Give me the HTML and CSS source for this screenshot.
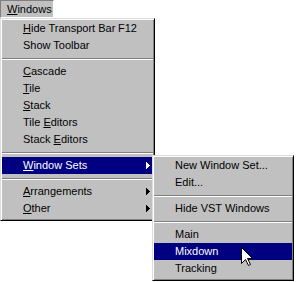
FILE: index.html
```html
<!DOCTYPE html>
<html>
<head>
<meta charset="utf-8">
<link rel="stylesheet" href="styles.css">
</head>
<body>
<div class="screen">
  <div class="menubar"><span class="mb-item pressed"><u>W</u>indows</span></div>

  <div class="menu main">
    <div class="item"><span class="label wide"><u>H</u>ide Transport Bar</span><span class="key">F12</span></div>
    <div class="item"><span class="label">Show Toolbar</span></div>
    <div class="sep"></div>
    <div class="item"><span class="label"><u>C</u>ascade</span></div>
    <div class="item"><span class="label"><u>T</u>ile</span></div>
    <div class="item"><span class="label"><u>S</u>tack</span></div>
    <div class="item"><span class="label">Tile <u>E</u>ditors</span></div>
    <div class="item"><span class="label">Stack <u>E</u>ditors</span></div>
    <div class="sep"></div>
    <div class="item active has-sub"><span class="label"><u>W</u>indow Sets</span><svg class="arrow" width="4" height="7" viewBox="0 0 4 7"><rect x="0" y="0" width="1" height="7"/><rect x="1" y="1" width="1" height="5"/><rect x="2" y="2" width="1" height="3"/><rect x="3" y="3" width="1" height="1"/></svg></div>
    <div class="sep"></div>
    <div class="item has-sub"><span class="label"><u>A</u>rrangements</span><svg class="arrow" width="4" height="7" viewBox="0 0 4 7"><rect x="0" y="0" width="1" height="7"/><rect x="1" y="1" width="1" height="5"/><rect x="2" y="2" width="1" height="3"/><rect x="3" y="3" width="1" height="1"/></svg></div>
    <div class="item has-sub"><span class="label"><u>O</u>ther</span><svg class="arrow" width="4" height="7" viewBox="0 0 4 7"><rect x="0" y="0" width="1" height="7"/><rect x="1" y="1" width="1" height="5"/><rect x="2" y="2" width="1" height="3"/><rect x="3" y="3" width="1" height="1"/></svg></div>
  </div>

  <div class="menu sub">
    <div class="item"><span class="label">New Window Set...</span></div>
    <div class="item"><span class="label">Edit...</span></div>
    <div class="sep"></div>
    <div class="item"><span class="label">Hide VST Windows</span></div>
    <div class="sep"></div>
    <div class="item"><span class="label">Main</span></div>
    <div class="item active"><span class="label">Mixdown</span></div>
    <div class="item"><span class="label">Tracking</span></div>
  </div>

  <svg class="cursor" width="12" height="20" viewBox="0 0 12 20">
    <path d="M0.5 0.5 V16.5 L4.5 12.5 L7.5 18.5 L9.5 17.5 L6.5 11.5 H11.5 Z" fill="#fff" stroke="#000" stroke-width="1" stroke-linejoin="miter"/>
  </svg>
</div>
</body>
</html>
```

FILE: styles.css
```css
html, body {
  margin: 0;
  padding: 0;
  background: #fff;
}

.screen {
  position: relative;
  width: 296px;
  height: 282px;
  overflow: hidden;
  font-family: "Liberation Sans", Arial, sans-serif;
  font-size: 11px;
  color: #000;
}

u {
  text-decoration: underline;
  text-underline-offset: 1px;
}

.menubar {
  display: flex;
  height: 18px;
}

.mb-item {
  box-sizing: border-box;
  width: 54px;
  height: 18px;
  padding-left: 6px;
  line-height: 16px;
  background: #c0c0c0;
  border-top: 1px solid #808080;
  border-left: 1px solid #808080;
  border-right: 1px solid #fff;
  border-bottom: 1px solid #fff;
}

.menu {
  position: absolute;
  box-sizing: border-box;
  background: #c0c0c0;
  padding: 1px;
  border: 1px solid;
  border-color: #dcdcdc #000 #000 #dcdcdc;
  box-shadow: inset 1px 1px 0 #fff, inset -1px -1px 0 #808080;
  display: flex;
  flex-direction: column;
}

.menu.main {
  left: 0;
  top: 18px;
  width: 155px;
  height: 203px;
}

.menu.sub {
  left: 152px;
  top: 155px;
  width: 142px;
  height: 126px;
}

.item {
  height: 17px;
  line-height: 17px;
  padding-left: 21px;
  padding-right: 3px;
  display: flex;
  align-items: center;
  white-space: pre;
}

.item .label.wide {
  width: 95px;
}

.item.active {
  background: #000080;
  color: #fff;
}

.has-sub .label {
  flex: 1;
}

.arrow {
  fill: currentColor;
  display: block;
}

.sep {
  height: 9px;
  display: flex;
  flex-direction: column;
  justify-content: center;
}

.sep::before {
  content: "";
  display: block;
  height: 1px;
  background: #808080;
  border-bottom: 1px solid #fff;
}

.cursor {
  position: absolute;
  left: 241px;
  top: 247px;
}
```
